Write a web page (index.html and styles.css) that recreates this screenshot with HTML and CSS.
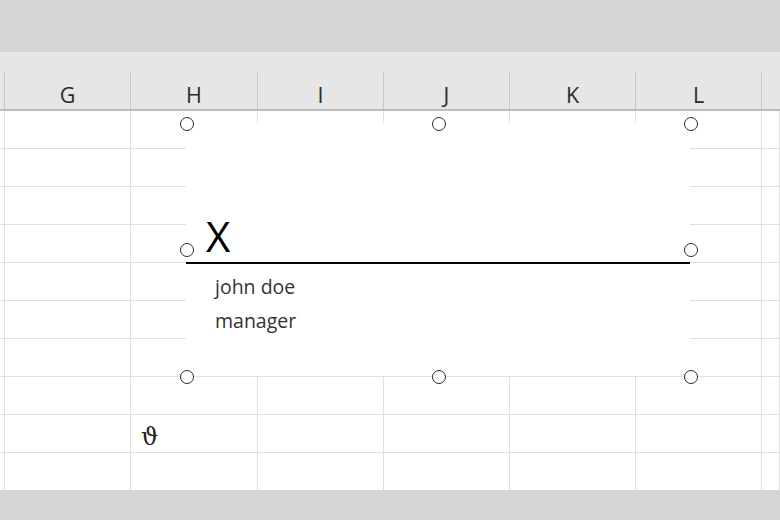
FILE: index.html
```html
<!DOCTYPE html>
<html>
<head>
<meta charset="utf-8">
<link rel="stylesheet" href="styles.css">
</head>
<body>
<div class="app">
  <div class="topbar"></div>
  <div class="sheet">
    <div class="colheads">
      <div class="ch edge"></div>
      <div class="ch">G</div>
      <div class="ch">H</div>
      <div class="ch">I</div>
      <div class="ch">J</div>
      <div class="ch">K</div>
      <div class="ch">L</div>
      <div class="ch last"></div>
    </div>
    <div class="cells">
      <div class="c"></div><div class="c"></div><div class="c"></div><div class="c"></div><div class="c"></div><div class="c"></div><div class="c"></div><div class="c"></div>
      <div class="c"></div><div class="c"></div><div class="c"></div><div class="c"></div><div class="c"></div><div class="c"></div><div class="c"></div><div class="c"></div>
      <div class="c"></div><div class="c"></div><div class="c"></div><div class="c"></div><div class="c"></div><div class="c"></div><div class="c"></div><div class="c"></div>
      <div class="c"></div><div class="c"></div><div class="c"></div><div class="c"></div><div class="c"></div><div class="c"></div><div class="c"></div><div class="c"></div>
      <div class="c"></div><div class="c"></div><div class="c"></div><div class="c"></div><div class="c"></div><div class="c"></div><div class="c"></div><div class="c"></div>
      <div class="c"></div><div class="c"></div><div class="c"></div><div class="c"></div><div class="c"></div><div class="c"></div><div class="c"></div><div class="c"></div>
      <div class="c"></div><div class="c"></div><div class="c"></div><div class="c"></div><div class="c"></div><div class="c"></div><div class="c"></div><div class="c"></div>
      <div class="c"></div><div class="c"></div><div class="c"></div><div class="c"></div><div class="c"></div><div class="c"></div><div class="c"></div><div class="c"></div>
      <div class="c"></div><div class="c"></div><div class="c theta">&#977;</div><div class="c"></div><div class="c"></div><div class="c"></div><div class="c"></div><div class="c"></div>
      <div class="c"></div><div class="c"></div><div class="c"></div><div class="c"></div><div class="c"></div><div class="c"></div><div class="c"></div><div class="c"></div>
    </div>
    <div class="sigbox">
      <div class="sig-x">X</div>
      <div class="sig-line"></div>
      <div class="sig-name">john doe</div>
      <div class="sig-title">manager</div>
      <span class="handle h-tl"></span>
      <span class="handle h-tc"></span>
      <span class="handle h-tr"></span>
      <span class="handle h-ml"></span>
      <span class="handle h-mr"></span>
      <span class="handle h-bl"></span>
      <span class="handle h-bc"></span>
      <span class="handle h-br"></span>
    </div>
  </div>
  <div class="bottombar"></div>
</div>
</body>
</html>
```

FILE: styles.css
```css
* { box-sizing: border-box; }
html, body {
  margin: 0;
  padding: 0;
  background: #ffffff;
}
.app {
  width: 780px;
  height: 520px;
  display: flex;
  flex-direction: column;
  overflow: hidden;
  font-family: "Open Sans", "Noto Sans", sans-serif;
}
.topbar {
  height: 52px;
  background: #d5d5d5;
  flex: none;
}
.sheet {
  position: relative;
  height: 438px;
  flex: none;
  overflow: hidden;
  background: #fff;
}
.colheads {
  display: grid;
  grid-template-columns: 5px 126px 127px 126px 126px 126px 126px 1fr;
  height: 59px;
  background: #e6e6e6;
  border-bottom: 2px solid #bdbdbd;
}
.ch {
  margin-top: 20px;
  height: 37px;
  border-right: 1px solid #c8c8c8;
  display: flex;
  justify-content: center;
  align-items: flex-end;
  font-size: 21.5px;
  line-height: 28px;
  color: #2b2b2b;
}
.ch.last { border-right: none; }
.cells {
  display: grid;
  grid-template-columns: 5px 126px 127px 126px 126px 126px 126px 1fr;
  grid-auto-rows: 38px;
}
.c {
  border-right: 1px solid #e0e0e0;
  border-bottom: 1px solid #e0e0e0;
}
.theta {
  font-family: "DejaVu Serif", "Liberation Serif", serif;
  font-size: 24px;
  line-height: 45px;
  padding-left: 10px;
  color: #222;
}
.sigbox {
  position: absolute;
  left: 186px;
  top: 71px;
  width: 504px;
  height: 253px;
  background: #fff;
  display: flex;
  flex-direction: column;
}
.sig-x {
  margin-top: 93px;
  padding-left: 20px;
  font-size: 42px;
  line-height: 40px;
  color: #000;
}
.sig-line {
  margin-top: 6px;
  height: 2px;
  background: #000;
}
.sig-name, .sig-title {
  padding-left: 29px;
  font-size: 19.5px;
  line-height: 34px;
  color: #333;
}
.sig-name { margin-top: 6px; }
.handle {
  position: absolute;
  width: 14px;
  height: 14px;
  margin: -6.5px 0 0 -6.5px;
  border: 1.5px solid #2a2a2a;
  border-radius: 50%;
  background: #fff;
}
.h-tl { left: 0; top: 0; }
.h-tc { left: 252px; top: 0; }
.h-tr { left: 504px; top: 0; }
.h-ml { left: 0; top: 126px; }
.h-mr { left: 504px; top: 126px; }
.h-bl { left: 0; top: 253px; }
.h-bc { left: 252px; top: 253px; }
.h-br { left: 504px; top: 253px; }
.bottombar {
  flex: 1;
  background: #d5d5d5;
}
```
